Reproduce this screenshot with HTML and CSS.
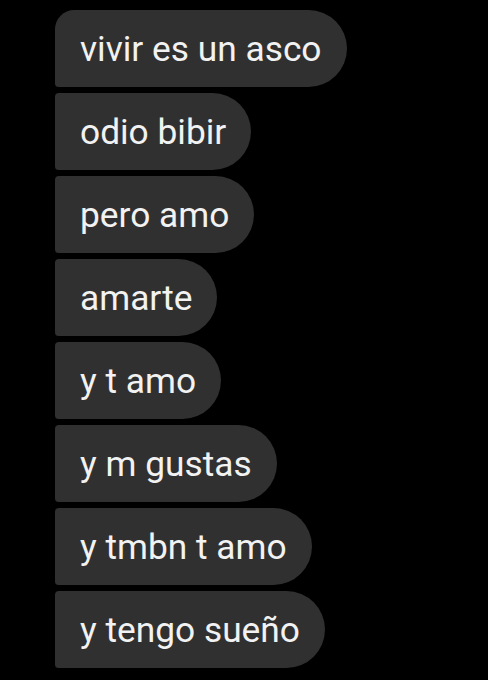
FILE: index.html
```html
<!DOCTYPE html>
<html lang="es">
<head>
  <meta charset="UTF-8" />
  <meta name="viewport" content="width=device-width, initial-scale=1.0"/>
  <title>Mensajes</title>
  <link rel="stylesheet" href="styles.css">
</head>
<body>
  <div class="chat">
    <div class="burbuja primera">vivir es un asco</div>
    <div class="burbuja">odio bibir</div>
    <div class="burbuja">pero amo</div>
    <div class="burbuja">amarte</div>
    <div class="burbuja">y t amo</div>
    <div class="burbuja">y m gustas</div>
    <div class="burbuja">y tmbn t amo</div>
    <div class="burbuja">y tengo sueño</div>
  </div>
</body>
</html>
```

FILE: styles.css
```css
:root {
  --negro: #000000;
  --burbuja: #303030;
  --texto: #f2f2f2;
}

body {
  margin: 0;
  padding: 0;
  height: 100vh;
  background: var(--negro);
  font-family: Roboto, 'Noto Sans', sans-serif;
  overflow: hidden;
}

.chat {
  display: flex;
  flex-direction: column;
  align-items: flex-start;
  gap: 6px;
  padding: 10px 0 0 55px;
}

.burbuja {
  background: var(--burbuja);
  color: var(--texto);
  font-size: 35.3px;
  line-height: 42px;
  padding: 18px 25px 17px 25px;
  border-radius: 4px 40px 40px 4px;
  white-space: nowrap;
}

.primera {
  border-top-left-radius: 20px;
}
```
